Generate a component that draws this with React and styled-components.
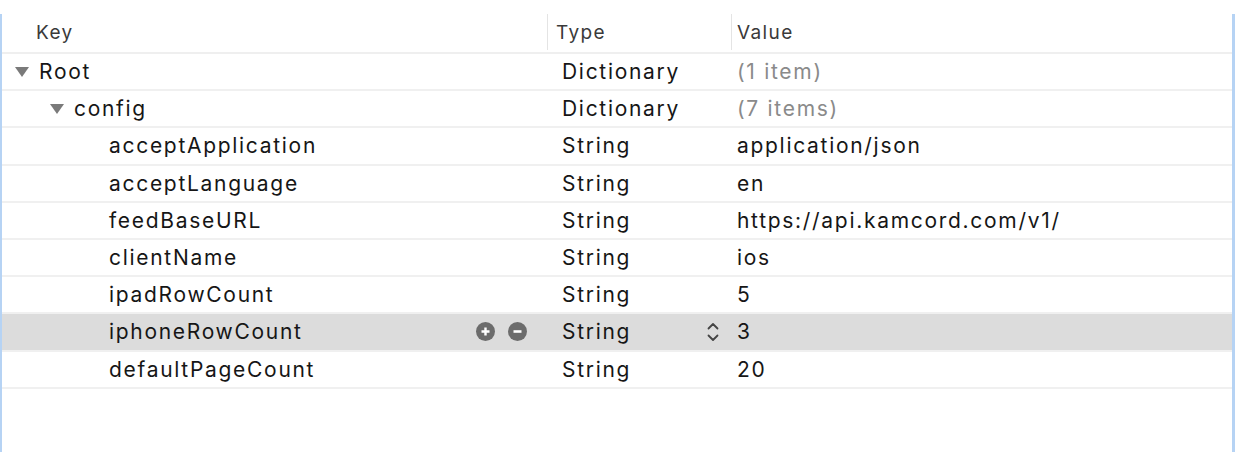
import React from 'react';
import styled, { createGlobalStyle } from 'styled-components';

const GlobalStyle = createGlobalStyle`
  html, body {
    margin: 0;
    padding: 0;
    background: #ffffff;
  }
  body {
    font-family: Inter, "Liberation Sans", sans-serif;
  }
`;

const Page = styled.div`
  width: 1238px;
  height: 452px;
  overflow: hidden;
  background: #fff;
  padding-top: 14px;
  box-sizing: border-box;
`;

const Frame = styled.div`
  width: 1235px;
  height: 438px;
  box-sizing: border-box;
  border-left: 2px solid #b6d3f4;
  border-right: 3px solid #b6d3f4;
`;

const Header = styled.div`
  display: grid;
  grid-template-columns: 545px 184px 1fr;
  height: 40px;
  border-bottom: 2px solid #efefef;
  box-sizing: border-box;
`;

const HeaderCell = styled.div`
  display: flex;
  align-items: center;
  height: 36px;
  padding-left: ${p => p.$pad}px;
  border-left: ${p => (p.$divider ? '1px solid #e4e4e4' : 'none')};
  font-size: 19px;
  letter-spacing: 1.4px;
  color: #3a3a3a;
`;

const Row = styled.div`
  display: grid;
  grid-template-columns: 545px 184px 1fr;
  height: 37.2px;
  border-bottom: 2px solid #f0f0f0;
  box-sizing: border-box;
  background: ${p => (p.$selected ? '#dcdcdc' : 'transparent')};
  font-size: 21px;
  letter-spacing: 1.7px;
  color: #161616;
`;

const KeyCell = styled.div`
  display: flex;
  align-items: center;
  padding-left: ${p => 12 + p.$depth * 35}px;
  padding-right: 20px;
`;

const Disclosure = styled.span`
  display: inline-flex;
  width: 25px;
  flex: none;
  svg {
    display: block;
  }
`;

const Controls = styled.div`
  margin-left: auto;
  display: flex;
  gap: 13px;
`;

const RoundButton = styled.span`
  width: 19px;
  height: 19px;
  border-radius: 50%;
  background: #6c6c6c;
  display: inline-flex;
  align-items: center;
  justify-content: center;
`;

const TypeCell = styled.div`
  display: flex;
  align-items: center;
  padding-left: 15px;
  padding-right: 11px;
`;

const Stepper = styled.span`
  margin-left: auto;
  display: inline-flex;
  svg {
    display: block;
  }
`;

const ValueCell = styled.div`
  display: flex;
  align-items: center;
  padding-left: 6px;
  color: ${p => (p.$muted ? '#8a8a8a' : '#161616')};
`;

const Triangle = () => (
  <svg width="16" height="12" viewBox="0 0 16 12">
    <path d="M1 1 L15 1 L8 11 Z" fill="#7a7a7a" />
  </svg>
);

const Plus = () => (
  <svg width="11" height="11" viewBox="0 0 11 11">
    <path d="M5.5 1.5 V9.5 M1.5 5.5 H9.5" stroke="#fff" strokeWidth="2.4" />
  </svg>
);

const Minus = () => (
  <svg width="11" height="11" viewBox="0 0 11 11">
    <path d="M1.5 5.5 H9.5" stroke="#fff" strokeWidth="2.6" />
  </svg>
);

const Chevrons = () => (
  <svg width="14" height="22" viewBox="0 0 14 22">
    <path d="M2.5 7.5 L7 3 L11.5 7.5" fill="none" stroke="#444" strokeWidth="1.8" strokeLinecap="round" strokeLinejoin="round" />
    <path d="M2.5 14.5 L7 19 L11.5 14.5" fill="none" stroke="#444" strokeWidth="1.8" strokeLinecap="round" strokeLinejoin="round" />
  </svg>
);

const rows = [
  { key: 'Root', depth: 0, open: true, type: 'Dictionary', value: '(1 item)', muted: true },
  { key: 'config', depth: 1, open: true, type: 'Dictionary', value: '(7 items)', muted: true },
  { key: 'acceptApplication', depth: 2, type: 'String', value: 'application/json' },
  { key: 'acceptLanguage', depth: 2, type: 'String', value: 'en' },
  { key: 'feedBaseURL', depth: 2, type: 'String', value: 'https://api.kamcord.com/v1/' },
  { key: 'clientName', depth: 2, type: 'String', value: 'ios' },
  { key: 'ipadRowCount', depth: 2, type: 'String', value: '5' },
  { key: 'iphoneRowCount', depth: 2, type: 'String', value: '3', selected: true },
  { key: 'defaultPageCount', depth: 2, type: 'String', value: '20' },
];

function App() {
  return (
    <Page>
      <GlobalStyle />
      <Frame>
        <Header>
          <HeaderCell $pad={34}>Key</HeaderCell>
          <HeaderCell $pad={8} $divider>Type</HeaderCell>
          <HeaderCell $pad={5} $divider>Value</HeaderCell>
        </Header>
        {rows.map((r) => (
          <Row key={r.key} $selected={r.selected}>
            <KeyCell $depth={r.depth}>
              <Disclosure>{r.open && <Triangle />}</Disclosure>
              {r.key}
              {r.selected && (
                <Controls>
                  <RoundButton><Plus /></RoundButton>
                  <RoundButton><Minus /></RoundButton>
                </Controls>
              )}
            </KeyCell>
            <TypeCell>
              {r.type}
              {r.selected && <Stepper><Chevrons /></Stepper>}
            </TypeCell>
            <ValueCell $muted={r.muted}>{r.value}</ValueCell>
          </Row>
        ))}
      </Frame>
    </Page>
  );
}

export default App;
